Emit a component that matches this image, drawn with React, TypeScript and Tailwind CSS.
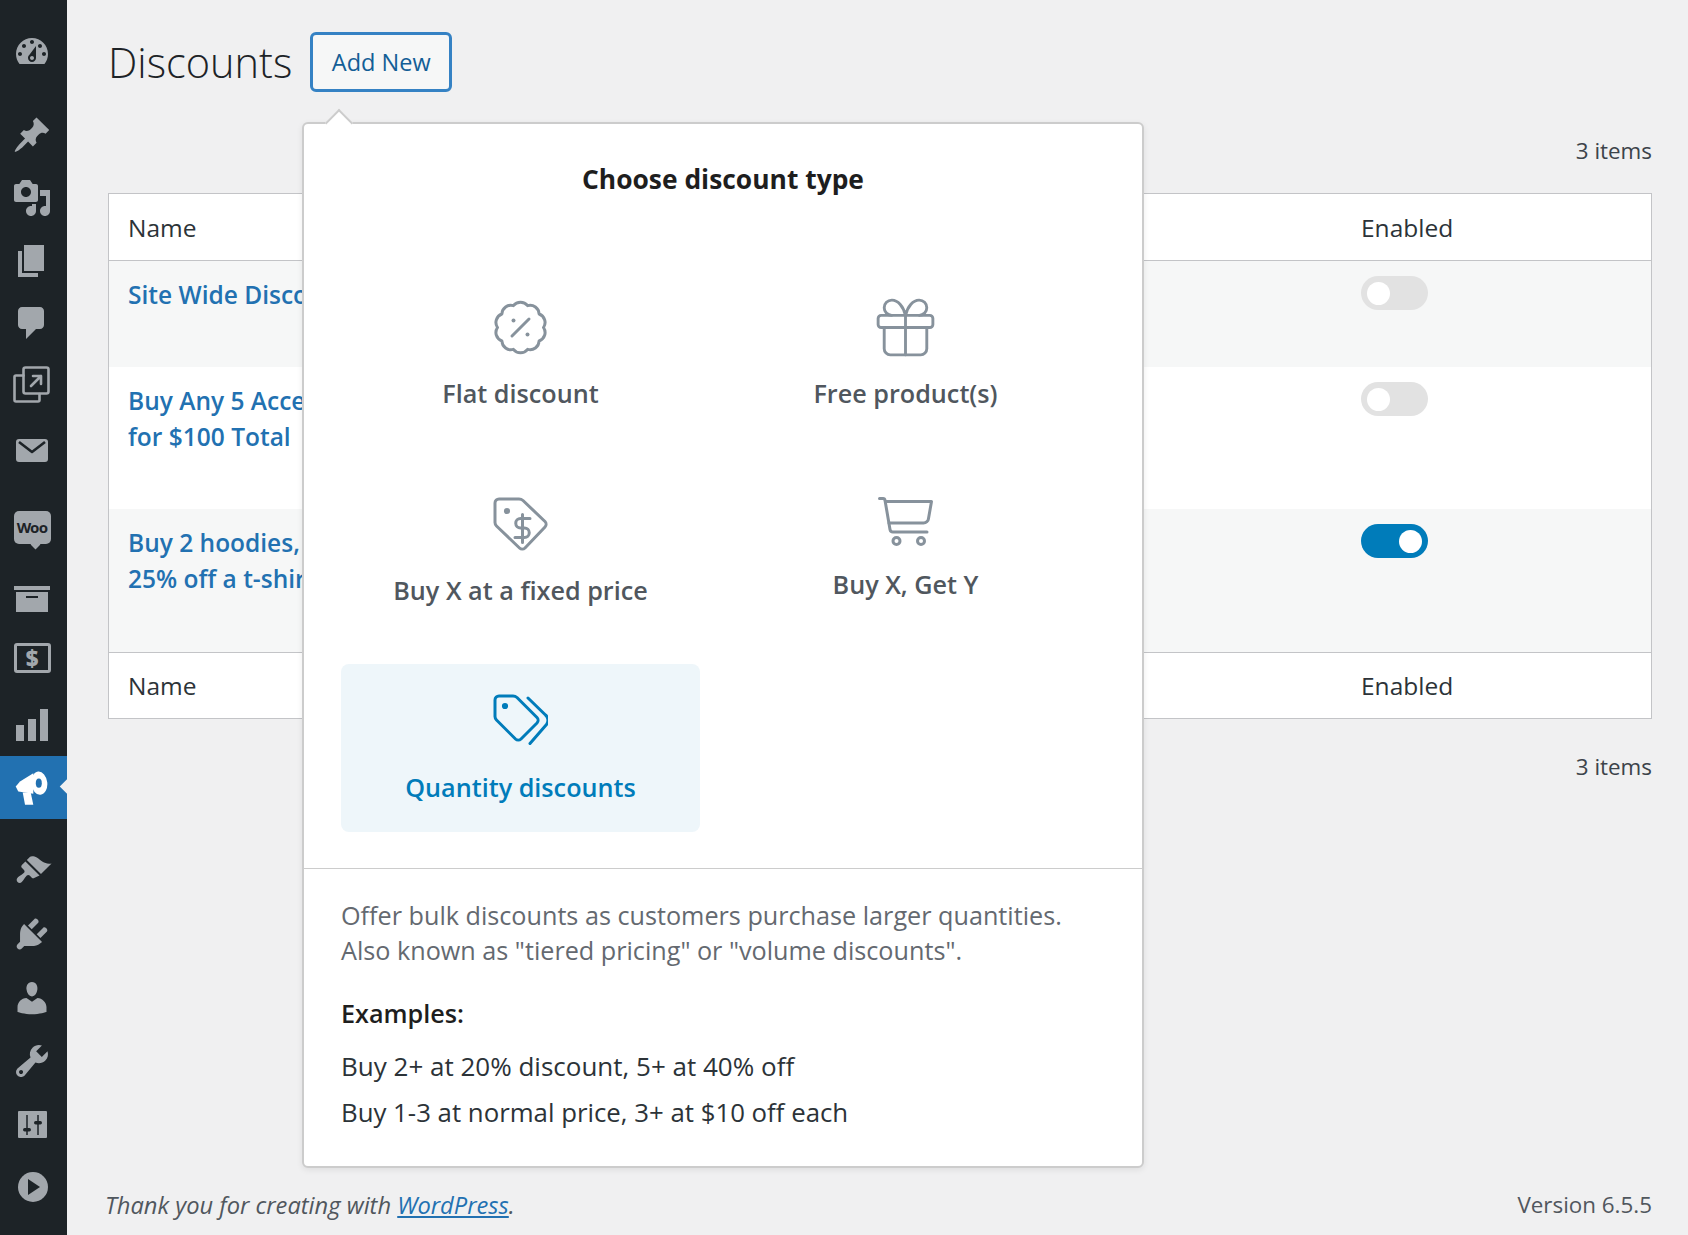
import { Gift } from "lucide-react";

const bar = "#a2a7ac";

const Dash = ({ d }: { d: string }) => (
  <svg viewBox="0 0 20 20" className="w-10 h-10" fill={bar} fillRule="evenodd">
    <path d={d} />
  </svg>
);

const menu = [
  { cls: "mt-[20px]", icon: <Dash d="M3.76 16h12.48c1.1-1.37 1.76-3.11 1.76-5 0-4.42-3.58-8-8-8s-8 3.58-8 8c0 1.89.66 3.63 1.76 5zM10 4c.55 0 1 .45 1 1s-.45 1-1 1-1-.45-1-1 .45-1 1-1zM6 6c.55 0 1 .45 1 1s-.45 1-1 1-1-.45-1-1 .45-1 1-1zm8 0c.55 0 1 .45 1 1s-.45 1-1 1-1-.45-1-1 .45-1 1-1zm-5.37 5.55L12 7v6c0 1.1-.9 2-2 2s-2-.9-2-2c0-.57.24-1.08.63-1.45zM4 10c.55 0 1 .45 1 1s-.45 1-1 1-1-.45-1-1 .45-1 1-1zm12 0c.55 0 1 .45 1 1s-.45 1-1 1-1-.45-1-1 .45-1 1-1zm-5 3c0-.55-.45-1-1-1s-1 .45-1 1 .45 1 1 1 1-.45 1-1z" /> },
  { cls: "mt-[20px]", icon: <Dash d="M10.44 3.02l1.82-1.82 6.36 6.35-1.83 1.82c-1.05-.68-2.48-.57-3.41.36l-.75.75c-.92.93-1.04 2.35-.35 3.41l-1.83 1.82-2.41-2.41-2.8 2.79c-.42.42-3.38 2.71-3.8 2.29s1.86-3.39 2.28-3.81l2.79-2.79L4.1 9.36l1.83-1.82c1.05.69 2.48.57 3.4-.36l.75-.75c.93-.92 1.05-2.35.36-3.41z" /> },
  { cls: "", icon: <Dash d="M13 11V4c0-.55-.45-1-1-1h-1.67L9 1H5L3.67 3H2c-.55 0-1 .45-1 1v7c0 .55.45 1 1 1h10c.55 0 1-.45 1-1zM7 4.5c1.38 0 2.5 1.12 2.5 2.5S8.38 9.5 7 9.5 4.5 8.38 4.5 7 5.62 4.5 7 4.5zM14 6h5v10.5c0 1.38-1.12 2.5-2.5 2.5S14 17.88 14 16.5s1.12-2.5 2.5-2.5c.17 0 .34.02.5.05V9h-3V6zm-4 8.05V13h2v3.5c0 1.38-1.12 2.5-2.5 2.5S7 17.88 7 16.5 8.12 14 9.5 14c.17 0 .34.02.5.05z" /> },
  { cls: "", icon: <Dash d="M6 15V2h10v13H6zm-1 1h8v2H3V5h2v11z" /> },
  { cls: "-mt-px", icon: <Dash d="M5 2h9c1.1 0 2 .9 2 2v7c0 1.1-.9 2-2 2h-2l-5 5v-5H5c-1.1 0-2-.9-2-2V4c0-1.1.9-2 2-2z" /> },
  {
    cls: "-mt-px",
    icon: (
      <svg viewBox="0 0 40 40" className="w-10 h-10" fill="none" stroke={bar} strokeWidth="2.6" strokeLinejoin="round" strokeLinecap="round">
        <path d="M11.5 10.5H4a1.5 1.5 0 0 0-1.5 1.5v23a1.5 1.5 0 0 0 1.5 1.5h22a1.5 1.5 0 0 0 1.5-1.5v-6" />
        <rect x="11.5" y="2.5" width="25" height="26" rx="2" />
        <path d="M19 21l10-10M21 11h8v8" />
      </svg>
    ),
  },
  {
    cls: "mt-[3px]",
    icon: (
      <svg viewBox="0 0 40 40" className="w-10 h-10">
        <rect x="4" y="8" width="32" height="23" rx="3" fill={bar} />
        <path d="M7 11l13 10 13-10" fill="none" stroke="#1d2327" strokeWidth="2.6" strokeLinejoin="round" />
      </svg>
    ),
  },
  {
    cls: "mt-[14px]",
    icon: (
      <div className="relative w-[37px] h-[33px] rounded-[5px] bg-[#a2a7ac] flex items-center justify-center font-['Noto_Sans',sans-serif] font-bold text-[15px] leading-none text-[#1d2327] tracking-tighter">
        Woo
        <span className="absolute left-[18px] -bottom-[4px] w-[7px] h-[7px] bg-[#a2a7ac] rotate-45" />
      </div>
    ),
  },
  { cls: "mt-[7px]", icon: <Dash d="M19 4v2H1V4h18zM2 7h16v10H2V7zm11 3V9H7v1h6z" /> },
  {
    cls: "-mt-[3px]",
    icon: (
      <div className="w-[37px] h-[30px] rounded-[3px] border-[3px] border-[#a2a7ac] flex items-center justify-center font-['Open_Sans',sans-serif] font-extrabold text-[22px] leading-none text-[#a2a7ac]">
        $
      </div>
    ),
  },
  { cls: "mt-[4px]", icon: <Dash d="M18 18V2h-4v16h4zm-6 0V7H8v11h4zm-6 0v-8H2v8h4z" /> },
  {
    cls: "bg-[#2271b1] relative",
    icon: (
      <>
        <svg viewBox="0 0 34 34" className="w-[34px] h-[34px]" fill="#fff">
          <path d="M18.3 2.200L5 10.500 .7 15.500l2.600 5 15 2.300z" />
          <path d="M7.700 21.500L10 33.800h8.300l-2.600-12.300z" />
          <ellipse cx="24.300" cy="12.200" rx="8" ry="11.700" transform="rotate(-6 24.300 12.200)" />
          <ellipse cx="23.800" cy="12.200" rx="3" ry="4.600" fill="#2271b1" />
        </svg>
        <span className="absolute right-[-6px] top-[25px] w-[11px] h-[11px] bg-[#f0f0f1] rotate-45" />
      </>
    ),
  },
  { cls: "mt-[21px]", icon: <Dash d="M14.48 11.06L7.41 3.99l1.5-1.5c.5-.56 2.3-.47 3.51.32 1.21.8 1.43 1.28 2.91 2.1 1.18.64 2.45 1.26 4.45.85zm-.71.71L6.7 4.7 4.93 6.47c-.39.39-.39 1.02 0 1.41l1.06 1.06c.39.39.39 1.03 0 1.42-.6.6-1.43 1.11-2.21 1.69-.35.26-.7.53-1.01.84-.58.58-.58 1.53 0 2.12.58.58 1.53.58 2.12 0 .31-.31.58-.66.84-1.01.58-.78 1.09-1.61 1.69-2.21.39-.39 1.03-.39 1.42 0l1.06 1.06c.39.39 1.02.39 1.41 0z" /> },
  { cls: "-mt-px", icon: <Dash d="M13.11 4.36L9.87 7.6 8 5.73l3.24-3.24c.35-.34 1.05-.2 1.56.32.52.51.66 1.21.31 1.55zm-8 1.77l.91-1.12 9.01 9.01-1.19.84c-.71.71-2.63 1.16-3.82 1.16H6.14L4.9 17.26c-.59.59-1.54.59-2.12 0-.59-.58-.59-1.53 0-2.12l1.24-1.24v-3.88c0-1.13.4-3.19 1.09-3.89zm7.26 3.97l3.24-3.24c.34-.35 1.04-.21 1.55.31.52.51.66 1.21.31 1.55l-3.24 3.25z" /> },
  { cls: "mt-px", icon: <Dash d="M10 9.25c-2.27 0-2.73-3.44-2.73-3.44C7 4.02 7.82 2 9.97 2c2.16 0 2.98 2.02 2.71 3.81 0 0-.41 3.44-2.68 3.44zm0 2.57L12.72 10c2.39 0 4.52 2.33 4.52 4.53v2.49s-3.65 1.13-7.24 1.13c-3.65 0-7.24-1.13-7.24-1.13v-2.49c0-2.25 1.94-4.48 4.47-4.48z" /> },
  { cls: "", icon: <Dash d="M16.68 9.77c-1.34 1.34-3.3 1.67-4.95.99l-5.41 6.52c-.99.99-2.59.99-3.58 0s-.99-2.59 0-3.57l6.52-5.42c-.68-1.65-.35-3.61.99-4.95 1.28-1.28 3.12-1.62 4.72-1.06l-2.89 2.89 2.82 2.82 2.86-2.87c.53 1.58.18 3.39-1.08 4.65zM3.81 16.21c.4.39 1.04.39 1.43 0 .4-.4.4-1.04 0-1.43-.39-.4-1.03-.4-1.43 0-.39.39-.39 1.03 0 1.43z" /> },
  {
    cls: "",
    icon: (
      <svg viewBox="0 0 40 40" className="w-10 h-10">
        <rect x="6" y="7" width="29" height="27" rx="1" fill={bar} />
        <path d="M15 11v20M26 11v20" stroke="#1d2327" strokeWidth="1.5" fill="none" />
        <rect x="11" y="24" width="8" height="3.500" rx="1.700" fill="#1d2327" />
        <rect x="22" y="17" width="8" height="3.500" rx="1.700" fill="#1d2327" />
      </svg>
    ),
  },
  {
    cls: "",
    icon: (
      <svg viewBox="0 0 40 40" className="w-10 h-10">
        <circle cx="21" cy="20" r="15" fill={bar} />
        <path d="M16 12l12 8-12 8z" fill="#1d2327" />
      </svg>
    ),
  },
];

const Sidebar = () => (
  <aside className="w-[67px] shrink-0 bg-[#1d2327] flex flex-col">
    {menu.map((m, i) => (
      <div key={i} className={`h-[63px] pr-[3px] flex items-center justify-center ${m.cls}`}>
        {m.icon}
      </div>
    ))}
  </aside>
);

const Toggle = ({ on = false }: { on?: boolean }) => (
  <div className={`w-[67px] h-[34px] rounded-full px-[6px] flex items-center ${on ? "bg-[#007cba] justify-end" : "bg-[#e2e2e2]"}`}>
    <span className="w-[23px] h-[23px] rounded-full bg-white" />
  </div>
);

const rows = [
  { h: "h-[106px]", bg: "bg-[#f6f7f7]", title: ["Site Wide Discount"], on: false },
  { h: "h-[142px]", bg: "bg-white", title: ["Buy Any 5 Accessories", "for $100 Total"], on: false },
  { h: "h-[143px]", bg: "bg-[#f6f7f7]", title: ["Buy 2 hoodies, get", "25% off a t-shirt"], on: true },
];

const TableHead = ({ cls }: { cls: string }) => (
  <div className={`flex items-center bg-white text-[#2c3338] ${cls}`}>
    <div className="flex-1 pl-[19px]">Name</div>
    <div className="w-[290px]">Enabled</div>
  </div>
);

const TagShape = ({ color, children }: { color: string; children: React.ReactNode }) => (
  <svg viewBox="0 0 55 55" className="w-[55px] h-[55px]" fill="none" stroke={color} strokeWidth="3" strokeLinecap="round" strokeLinejoin="round">
    {children}
  </svg>
);

// scalloped outline: ten arcs round the centre
const scallopPoint = (i: number) => {
  const a = (i / 10) * Math.PI * 2 - Math.PI / 2 + Math.PI / 10;
  return `${(27.5 + 23 * Math.cos(a)).toFixed(2)} ${(27.5 + 23 * Math.sin(a)).toFixed(2)}`;
};
const scallop = `M${scallopPoint(0)} ${Array.from({ length: 10 }, (_, i) => `A9 9 0 0 1 ${scallopPoint(i + 1)}`).join(" ")} Z`;

const PercentBadge = () => (
  <TagShape color="#87929c">
    <path d={scallop} />
    <path d="M36 19L19 36" />
    <circle cx="20.500" cy="20.500" r="2" fill="#87929c" stroke="none" />
    <circle cx="34.500" cy="34.500" r="2" fill="#87929c" stroke="none" />
  </TagShape>
);

const DollarTag = () => (
  <TagShape color="#87929c">
    <path d="M2 6a4 4 0 0 1 4-4h20a6 6 0 0 1 4 1.500l22 21a4 4 0 0 1 0 5.500L32 51a4 4 0 0 1-5.500 0L3.500 29A5 5 0 0 1 2 25.500z" />
    <circle cx="14" cy="14" r="1.600" fill="#87929c" />
    <path d="M37 21.500h-9.500a4.500 4.500 0 0 0 0 9.500h4a4.500 4.500 0 0 1 0 9.500H22M29.500 17.500v28" />
  </TagShape>
);

const DoubleTag = () => (
  <TagShape color="#007cba">
    <path d="M2 6a4 4 0 0 1 4-4h14a6 6 0 0 1 4 1.500l20 20a4 4 0 0 1 0 5.500L28 45a4 4 0 0 1-5.500 0L3.500 26A5 5 0 0 1 2 22.500z" />
    <circle cx="12" cy="12" r="1.600" fill="#007cba" />
    <path d="M35 2l17.500 17a7 7 0 0 1 1 9.500L37 47.500" transform="translate(0 2)" />
  </TagShape>
);

const Cart = () => (
  <svg viewBox="0 0 55 49" className="w-[55px] h-[49px]" fill="none" stroke="#87929c" strokeWidth="3" strokeLinecap="round" strokeLinejoin="round">
    <path d="M1.500 1.500H5a2 2 0 0 1 2 1.700l5 29.300a3 3 0 0 0 3 2.500h34" />
    <path d="M8 4.500h45.500l-3 17a5 5 0 0 1-5 4.500H11" />
    <circle cx="18.500" cy="44" r="3.500" />
    <circle cx="43" cy="44" r="3.500" />
  </svg>
);

const Option = ({ icon, label, active }: { icon: React.ReactNode; label: string; active?: boolean }) => (
  <div className={`h-[168px] rounded-[8px] pt-[30px] flex flex-col items-center text-[25.200px] font-[550] ${active ? "bg-[#eef6fa] text-[#007cba]" : "text-[#50575e]"}`}>
    {icon}
    <div className="mt-[20px] leading-[36px]">{label}</div>
  </div>
);

const Popover = () => (
  <div className="absolute left-[235px] top-[122px] w-[842px] h-[1046px] bg-white border-2 border-[#ccc] rounded-[6px] shadow-[0_2px_6px_rgba(0,0,0,0.08)] flex flex-col">
    <span className="absolute left-[25px] -top-[11px] w-[20px] h-[20px] bg-white border-l-2 border-t-2 border-[#ccc] rotate-45" />
    <h2 className="mt-[35px] text-center text-[26.400px] leading-[40px] font-bold text-[#1e1e1e]">Choose discount type</h2>
    <div className="mt-[71px] ml-[37px] grid grid-cols-[359px_359px] gap-x-[26px] gap-y-[29px]">
      <Option label="Flat discount" icon={<PercentBadge />} />
      <Option label="Free product(s)" icon={<Gift size={73} strokeWidth={0.95} color="#87929c" className="-m-[9px]" />} />
      <Option label="Buy X at a fixed price" icon={<DollarTag />} />
      <Option label="Buy X, Get Y" icon={<Cart />} />
      <Option label="Quantity discounts" active icon={<DoubleTag />} />
    </div>
    <div className="mt-[36px] border-t border-[#ccc] px-[37px] pt-[29px] text-[#646970] text-[25.200px]">
      <p className="leading-[35px]">
        Offer bulk discounts as customers purchase larger quantities.
        <br />
        Also known as "tiered pricing" or "volume discounts".
      </p>
      <p className="mt-[27px] leading-[36px] font-[550] text-[#1e1e1e]">Examples:</p>
      <p className="mt-[17px] leading-[36px] text-[26px] text-[#2c3338]">Buy 2+ at 20% discount, 5+ at 40% off</p>
      <p className="mt-[10px] leading-[36px] text-[25.800px] text-[#2c3338]">Buy 1-3 at normal price, 3+ at $10 off each</p>
    </div>
  </div>
);

export default function App() {
  return (
    <div className="w-[1688px] h-[1235px] overflow-hidden bg-[#f0f0f1] flex font-['Open_Sans',sans-serif] text-[24.500px]">
      <Sidebar />
      <main className="relative flex-1 flex flex-col pl-[41px] pr-[36px]">
        <header className="flex items-center h-[60px] mt-[32px]">
          <h1 className="text-[41.500px] font-[350] text-[#1d2327]">Discounts</h1>
          <button className="ml-[18px] w-[142px] h-[60px] pt-[2px] rounded-[6px] border-[3px] border-[#3582c4] bg-[#f6f7f7] text-[23.500px] text-[#135e96]">Add New</button>
        </header>
        <div className="mt-[42px] text-right text-[22.400px] text-[#3c434a] leading-[34px]">3 items</div>
        <div className="mt-[25px] border border-[#c3c4c7] flex flex-col">
          <TableHead cls="h-[67px] pt-[2px] border-b border-[#c3c4c7]" />
          {rows.map((r) => (
            <div key={r.title[0]} className={`flex pt-[15px] ${r.h} ${r.bg}`}>
              <div className="flex-1 pl-[19px] pt-px leading-[36px] font-[550] text-[#2271b1]">
                {r.title.map((t) => (
                  <div key={t}>{t}</div>
                ))}
              </div>
              <div className="w-[290px]">
                <Toggle on={r.on} />
              </div>
            </div>
          ))}
          <TableHead cls="h-[66px] pt-[2px] border-t border-[#c3c4c7]" />
        </div>
        <div className="mt-[31px] text-right text-[22.400px] text-[#3c434a] leading-[34px]">3 items</div>
        <footer className="mt-auto mb-[12px] -ml-[3px] flex justify-between items-center leading-[36px] text-[#50575e]">
          <span className="italic text-[23.700px]">
            Thank you for creating with <a className="text-[#2271b1] underline">WordPress</a>.
          </span>
          <span className="text-[22.400px]">Version 6.5.5</span>
        </footer>
        <Popover />
      </main>
    </div>
  );
}
